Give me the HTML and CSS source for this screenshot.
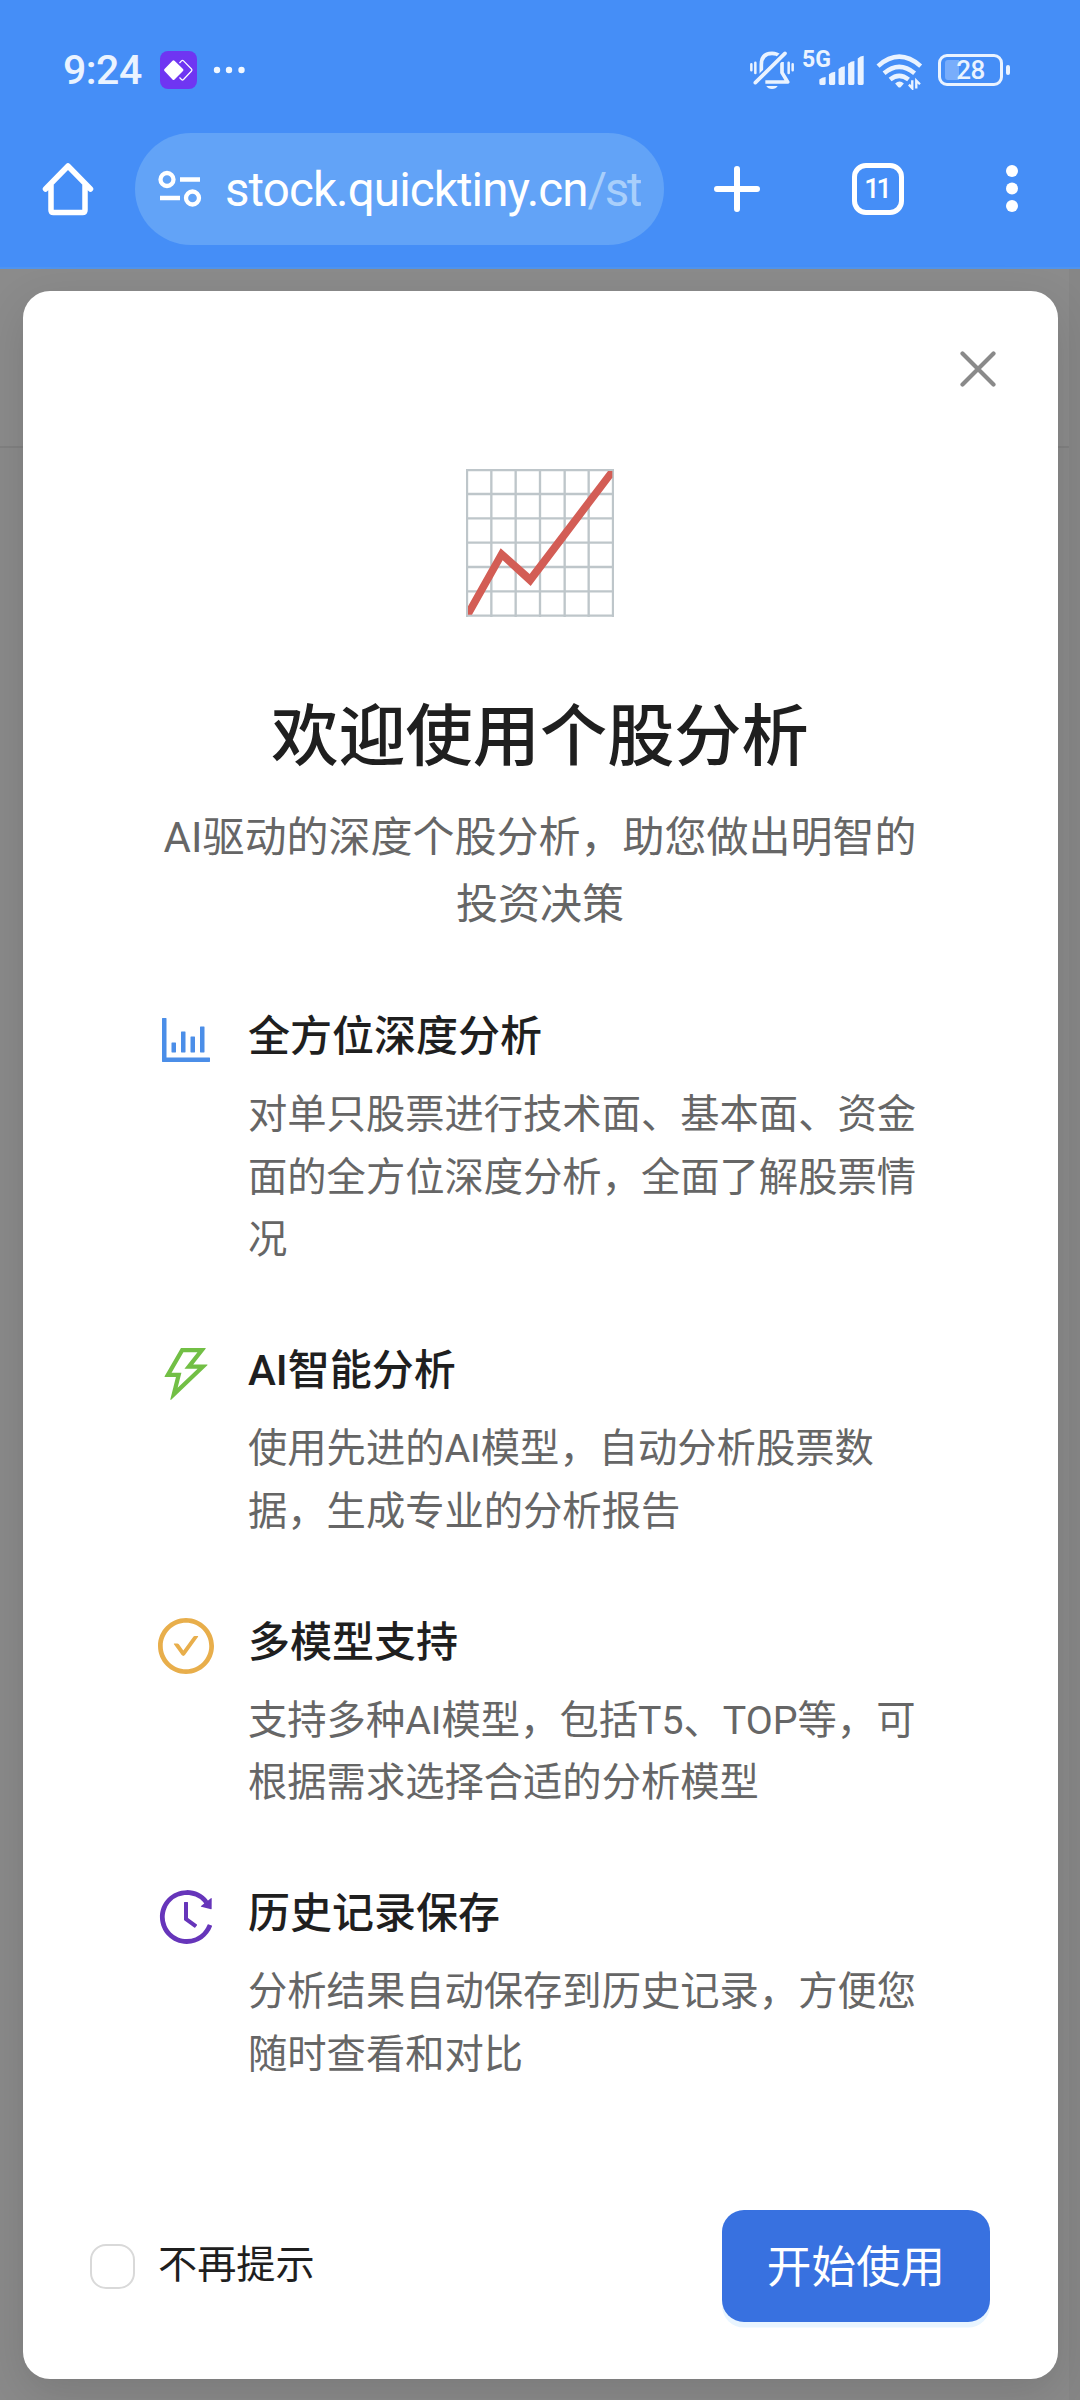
FILE: index.html
```html
<!DOCTYPE html>
<html lang="zh-CN">
<head>
<meta charset="utf-8">
<title>个股分析</title>
<link rel="stylesheet" href="styles.css">
</head>
<body>
<header class="browser">
  <div class="status">
    <span class="time">9:24</span>
    <svg class="app-icon" viewBox="0 0 37 38"><rect width="37" height="38" rx="8" fill="#6f35f2"/><path d="M19.5 12l2-2.2q1-1 2 0l8 8.200q1 1 0 2l-8 8.500q-1 1-2 0l-2-2" fill="none" stroke="#fff" stroke-width="1.200"/><path d="M12.500 9.700q1-1 2 0l8.500 8.300q1 1 0 2l-8.500 8.500q-1 1-2 0L4.500 20q-1-1 0-2z" fill="#fff"/></svg>
    <svg class="more-icon" viewBox="0 0 32 8" fill="#f2f8ff"><circle cx="4" cy="4" r="3.200"/><circle cx="16" cy="4" r="3.200"/><circle cx="28.500" cy="4" r="3.200"/></svg>
    <div class="status-right">
      <svg class="bell" viewBox="30 30 135 120" fill="none" stroke="#eaf3ff" stroke-width="11">
        <path d="M34 73v18M46 68v31M146 68v31M158 73v18" stroke-width="7.500" stroke-linecap="round"/>
        <path d="M64 102V74q0-34 32-34 15 0 24 9M126 66v32l17 28H76" stroke-linejoin="round"/>
        <path d="M135 40L46 128" stroke="#458ef7" stroke-width="22"/>
        <path d="M135 40L46 128" stroke-linecap="round"/>
        <path d="M79 138h34q-5 9-17 9t-17-9z" fill="#eaf3ff" stroke="none"/>
      </svg>
      <span class="net">5G</span>
      <svg class="signal" viewBox="237 45 136 90" fill="#eaf3ff"><path d="M238 119q8-8 19-8v20q0 4-4 4h-11q-4 0-4-4zM267 103q8-8 19-8v36q0 4-4 4h-11q-4 0-4-4zM296 87q8-8 19-8v52q0 4-4 4h-11q-4 0-4-4zM325 71q8-8 19-8v68q0 4-4 4h-11q-4 0-4-4zM354 55q8-8 18-8v84q0 4-4 4h-10q-4 0-4-4z"/></svg>
      <svg class="wifi" viewBox="410 36 140 110" fill="none" stroke="#eaf3ff" stroke-width="13.500"><path d="M416 75q63-56 127 0M434 96q45-38 91 0M452 115q27-22 55 0" stroke-linecap="butt"/><path d="M467 127q13-13 26 0l-9 10q-4 4-8 0z" fill="#eaf3ff" stroke="none"/><path d="M518 117v24l-10-11M530 142v-24l11 11" stroke-width="7"/></svg>
      <div class="battery"><span class="level"></span><span class="percent">28</span></div>
    </div>
  </div>
  <div class="toolbar">
    <svg class="home" viewBox="0 0 52 54" fill="none" stroke="#fff" stroke-width="5.500" stroke-linecap="round" stroke-linejoin="round"><path d="M3.500 27L26 4l22.500 23M9 22v26q0 2.500 2.500 2.500h29q2.500 0 2.500-2.500V22"/></svg>
    <div class="address">
      <svg class="tune" viewBox="0 0 44 38" fill="none" stroke="#fff" stroke-width="4.300"><circle cx="9" cy="9.500" r="6.500"/><path d="M22 9.500h20M2 28h20"/><circle cx="34.500" cy="28" r="6.500"/></svg>
      <div class="url">stock.quicktiny.cn<span class="path">/sto</span></div>
    </div>
    <svg class="plus" viewBox="0 0 48 48" stroke="#fff" stroke-width="6" stroke-linecap="round"><path d="M24 4v40M4 24h40"/></svg>
    <div class="tabs">11</div>
    <svg class="menu" viewBox="0 0 12 48" fill="#fff"><circle cx="6" cy="6" r="6"/><circle cx="6" cy="23.500" r="6"/><circle cx="6" cy="41" r="6"/></svg>
  </div>
</header>
<main class="page">
  <section class="modal">
    <svg class="close" viewBox="0 0 36 36" stroke="#8a8a8a" stroke-width="4.200" stroke-linecap="round"><path d="M2.500 2.500l31 31M33.500 2.500l-31 31"/></svg>
    <svg class="hero" viewBox="48 42 444 444" fill="none">
      <path d="M51 42v444M124 42v444M197 42v444M270 42v444M344 42v444M416 42v444M489 42v444M48 45h444M48 117h444M48 190h444M48 263h444M48 336h444M48 409h444M48 482h444" stroke="#bec6ca" stroke-width="7"/>
      <path d="M54 479V454L152 280l87 77L474 48h13v20L242 393l-84-77L66 479z" fill="#d35d55"/>
    </svg>
    <h1 class="title">欢迎使用个股分析</h1>
    <p class="subtitle">AI驱动的深度个股分析，助您做出明智的投资决策</p>
    <ul class="features">
      <li class="feature">
        <svg class="icon blue" viewBox="64 64 896 896"><path d="M888 792H200V168c0-4.400-3.600-8-8-8h-56c-4.400 0-8 3.600-8 8v688c0 4.400 3.600 8 8 8h752c4.400 0 8-3.600 8-8v-56c0-4.400-3.600-8-8-8zm-600-80h56c4.400 0 8-3.600 8-8V560c0-4.400-3.600-8-8-8h-56c-4.400 0-8 3.600-8 8v144c0 4.400 3.600 8 8 8zm152 0h56c4.400 0 8-3.600 8-8V384c0-4.400-3.600-8-8-8h-56c-4.400 0-8 3.600-8 8v320c0 4.400 3.600 8 8 8zm152 0h56c4.400 0 8-3.600 8-8V462c0-4.400-3.600-8-8-8h-56c-4.400 0-8 3.600-8 8v242c0 4.400 3.600 8 8 8zm152 0h56c4.400 0 8-3.600 8-8V304c0-4.400-3.600-8-8-8h-56c-4.400 0-8 3.600-8 8v400c0 4.400 3.600 8 8 8z"/></svg>
        <div class="text"><h2>全方位深度分析</h2><p>对单只股票进行技术面、基本面、资金面的全方位深度分析，全面了解股票情况</p></div>
      </li>
      <li class="feature">
        <svg class="icon green" viewBox="64 64 896 896"><path d="M848 359.300H627.700L825.800 109c4.100-5.300.4-13-6.300-13H436c-2.800 0-5.500 1.500-6.900 4L170 547.500c-3.100 5.300.7 12 6.900 12h174.400l-89.400 357.600c-1.900 7.800 7.500 13.300 13.300 7.700L853.500 373c5.200-4.900 1.700-13.700-5.500-13.700zM378.200 732.500l60.300-241H281.100l189.600-327.400h224.600L487 427.400h211L378.200 732.500z"/></svg>
        <div class="text"><h2>AI智能分析</h2><p>使用先进的AI模型，自动分析股票数据，生成专业的分析报告</p></div>
      </li>
      <li class="feature">
        <svg class="icon orange" viewBox="64 64 896 896"><path d="M699 353h-46.900c-10.200 0-19.900 4.900-25.900 13.300L469 584.300l-71.200-98.800c-6-8.300-15.600-13.300-25.900-13.300H325c-6.500 0-10.300 7.400-6.500 12.700l124.600 172.800a31.800 31.800 0 0051.700 0l210.600-292c3.900-5.300.1-12.700-6.400-12.700z"/><path d="M512 64C264.600 64 64 264.600 64 512s200.600 448 448 448 448-200.600 448-448S759.400 64 512 64zm0 820c-205.400 0-372-166.600-372-372s166.600-372 372-372 372 166.600 372 372-166.600 372-372 372z"/></svg>
        <div class="text"><h2>多模型支持</h2><p>支持多种AI模型，包括T5、TOP等，可根据需求选择合适的分析模型</p></div>
      </li>
      <li class="feature">
        <svg class="icon purple" viewBox="64 64 896 896"><path d="M536.100 273H488c-4.400 0-8 3.600-8 8v275.300c0 2.600 1.200 5 3.300 6.500l165.300 120.700c3.600 2.600 8.600 1.900 11.200-1.700l28.600-39c2.700-3.700 1.900-8.700-1.700-11.200L544.100 528.500V281c0-4.400-3.600-8-8-8zm219.800 75.200l156.800 38.300c5 1.200 9.900-2.600 9.900-7.700l.8-161.500c0-6.700-7.700-10.500-12.900-6.300L752.900 334.100a8 8 0 003 14.100zm167.700 301.100l-56.700-19.500a8 8 0 00-10.100 4.800c-1.900 5.100-3.900 10.100-6 15.100-17.800 42.100-43.300 80-75.900 112.500a353 353 0 01-112.500 75.900 352.180 352.180 0 01-137.700 27.800c-47.800 0-94.100-9.300-137.700-27.800a353 353 0 01-112.500-75.900c-32.500-32.500-58-70.400-75.900-112.500A353.440 353.440 0 01171 512c0-47.800 9.300-94.200 27.800-137.800 17.800-42.100 43.300-80 75.900-112.500a353 353 0 01112.500-75.900C430.600 167.300 477 158 524.800 158s94.100 9.300 137.700 27.800A353 353 0 01775 261.700c10.200 10.300 19.800 21 28.600 32.300l59.800-46.800C784.700 146.600 662.200 81.900 524.600 82 285 82.100 92.600 276.700 95 516.400 97.400 751.900 288.900 942 524.800 942c185.500 0 343.500-117.600 403.700-282.300 1.500-4.200-.7-8.900-4.900-10.400z"/></svg>
        <div class="text"><h2>历史记录保存</h2><p>分析结果自动保存到历史记录，方便您随时查看和对比</p></div>
      </li>
    </ul>
    <footer class="footer">
      <label class="again"><span class="box"></span><span class="again-text">不再提示</span></label>
      <button class="start">开始使用</button>
    </footer>
  </section>
</main>
</body>
</html>
```
FILE: styles.css
```css
* { box-sizing: border-box; }

body {
  margin: 0;
  width: 1080px;
  height: 2400px;
  display: flex;
  flex-direction: column;
  overflow: hidden;
  font-family: Roboto, "Noto Sans CJK SC", sans-serif;
}

svg { display: block; flex: none; }
h1, h2, p, ul { margin: 0; padding: 0; }

/* Browser chrome */
.browser {
  height: 269px;
  flex: none;
  background: #458ef7;
  border-bottom: 2px solid #5094ee;
  color: #fff;
}
.status {
  height: 133px;
  padding: 7px 77px 0 63px;
  display: flex;
  align-items: center;
  color: #eaf3ff;
}
.time { width: 97px; font-size: 41px; font-weight: 500; letter-spacing: -0.5px; line-height: 40px; }
.app-icon { width: 37px; height: 38px; }
.more-icon { width: 32px; height: 8px; margin-left: 16px; }
.status-right { margin-left: auto; display: flex; align-items: center; }
.bell { width: 45px; height: 40px; }
.net { margin: -21px 0 0 7px; width: 17px; font-size: 23px; font-weight: 700; line-height: 20px; white-space: nowrap; }
.signal { width: 45px; height: 30px; }
.wifi { width: 47px; height: 37px; margin: 2px 0 0 12px; }
.battery {
  position: relative;
  width: 65px;
  height: 32px;
  margin: -1px 0 0 15px;
  border: 3px solid #eaf3ff;
  border-radius: 9px;
}
.battery::after {
  content: "";
  position: absolute;
  right: -10px;
  top: 8px;
  width: 4px;
  height: 10px;
  border-radius: 2px;
  background: #eaf3ff;
}
.level { position: absolute; left: 4px; top: 3px; width: 14px; height: 20px; border-radius: 3px 0 0 3px; background: #78adfb; }
.percent { position: absolute; left: 0; right: 0; top: 0; text-align: center; font-size: 26px; font-weight: 500; line-height: 27px; letter-spacing: -0.5px; }

.toolbar { height: 112px; padding: 0 62px 0 42px; display: flex; align-items: center; }
.home { width: 52px; height: 54px; }
.address {
  width: 529px;
  height: 112px;
  margin-left: 41px;
  padding: 0 23px;
  display: flex;
  align-items: center;
  border-radius: 56px;
  background: #62a3f7;
}
.tune { width: 44px; height: 38px; }
.url { margin-left: 23px; width: 416px; overflow: hidden; white-space: nowrap; font-size: 47.500px; line-height: 64px; letter-spacing: -0.900px; padding-top: 1px; }
.path { color: #a9cffb; letter-spacing: -2.400px; }
.plus { width: 48px; height: 48px; margin-left: 49px; }
.tabs {
  width: 52px;
  height: 52px;
  margin-left: 91px;
  border: 5.500px solid #fff;
  border-radius: 14px;
  text-align: center;
  font-size: 27px;
  font-weight: 500;
  line-height: 43px;
  letter-spacing: -3px;
  text-indent: -3px;
}
.menu { width: 12px; height: 48px; margin-left: auto; }

/* Dimmed page behind the dialog */
.page {
  flex: 1;
  padding: 22px 22px 21px 23px;
  background: linear-gradient(#8b8b8b, #8b8b8b) 0 0 / 1069px 177px no-repeat,
    linear-gradient(#818181, #818181) 0 177px / 1069px 2px no-repeat,
    linear-gradient(to right, #8a8a8a 1069px, #868686 1069px);
}

/* Dialog */
.modal {
  height: 2088px;
  padding: 60px 68px 57px 67px;
  display: flex;
  flex-direction: column;
  align-items: center;
  border-radius: 27px;
  background: #fff;
  box-shadow: 0 14px 45px rgba(0, 0, 0, 0.12);
}
.close { width: 36px; height: 36px; align-self: flex-end; margin-right: -6px; }
.hero { width: 148px; height: 148px; margin-top: 82px; }
.title {
  margin-top: 73px;
  font-size: 67.200px;
  font-weight: 500;
  line-height: 94px;
  color: #1f1f1f;
}
.subtitle {
  width: 770px;
  margin-top: 20px;
  font-size: 42px;
  line-height: 67px;
  text-align: center;
  color: #666;
}
.features { width: 764px; margin-top: 65px; list-style: none; }
.feature { display: flex; margin-bottom: 65px; }
.icon { width: 56px; height: 56px; margin-top: 9px; }
.blue { fill: #4b8ee8; }
.green { fill: #72bf45; }
.orange { fill: #e8ae4b; }
.purple { fill: #6635ba; }
.text { margin-left: 34px; width: 674px; }
.text h2 { font-size: 42px; font-weight: 500; line-height: 67px; color: #1f1f1f; }
.text p { margin-top: 14px; font-size: 39.300px; line-height: 62.700px; color: #666; }

.footer { width: 100%; margin-top: auto; display: flex; align-items: center; justify-content: space-between; }
.again { display: flex; align-items: center; font-size: 39.200px; line-height: 60px; color: #1f1f1f; }
.again-text { padding-bottom: 2px; }
.box { width: 45px; height: 45px; margin-right: 23px; border: 2px solid #d9d9d9; border-radius: 16px; }
.start {
  width: 268px;
  height: 112px;
  padding: 0 0 6px;
  border: 0;
  border-radius: 22px;
  background: #3871e0;
  box-shadow: 0 5.600px 0 #e9f5ff;
  color: #fff;
  font: 400 44.600px Roboto, "Noto Sans CJK SC", sans-serif;
}
```
